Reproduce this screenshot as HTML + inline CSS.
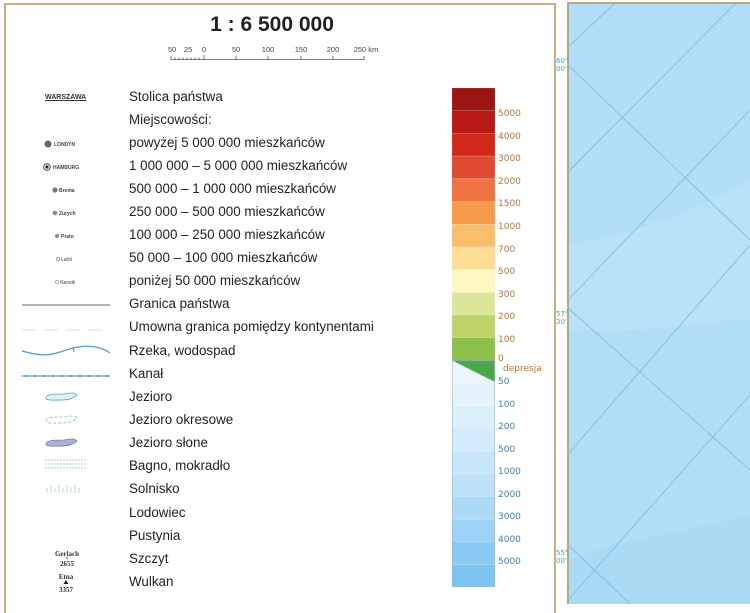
<!DOCTYPE html>
<html><head><meta charset="utf-8"><style>
html,body{margin:0;padding:0;background:#fff;}
body{width:750px;height:604px;position:relative;overflow:hidden;font-family:"Liberation Sans",sans-serif;}
.panel{position:absolute;left:4px;top:3px;width:552px;height:610px;border:2px solid #c9ad86;border-bottom:none;box-sizing:border-box;}
.t{position:absolute;left:129px;font-size:13.4px;line-height:18px;color:#222;white-space:nowrap;}
.s{position:absolute;font-size:7px;color:#333;white-space:nowrap;font-weight:bold;}
.lab{position:absolute;left:498px;font-size:9px;line-height:10px;font-family:"DejaVu Sans",sans-serif;}
.o{color:#b8733a;} .b{color:#3a80b5;}
</style></head><body>
<div class="panel"></div>
<div style="position:absolute;left:172px;top:13px;width:200px;text-align:center;font-size:21px;font-weight:bold;color:#222;">1 : 6 500 000</div>
<svg style="position:absolute;left:0;top:0" width="400" height="70">
<g font-size="7.5" fill="#444" font-family="Liberation Sans" text-anchor="middle">
<text x="172" y="52">50</text><text x="188" y="52">25</text><text x="204" y="52">0</text><text x="236" y="52">50</text><text x="268" y="52">100</text><text x="301" y="52">150</text><text x="333" y="52">200</text><text x="366" y="52">250 km</text></g>
<g stroke="#555" stroke-width="0.8"><line x1="171" y1="59.5" x2="364" y2="59.5"/>
<line x1="171" y1="56" x2="171" y2="60"/><line x1="204" y1="55" x2="204" y2="60"/><line x1="236" y1="56" x2="236" y2="60"/><line x1="268" y1="56" x2="268" y2="60"/><line x1="301" y1="56" x2="301" y2="60"/><line x1="333" y1="56" x2="333" y2="60"/><line x1="364" y1="56" x2="364" y2="60"/>
<line x1="175" y1="57.5" x2="175" y2="60"/><line x1="179" y1="57.5" x2="179" y2="60"/><line x1="183" y1="57.5" x2="183" y2="60"/><line x1="187" y1="57.5" x2="187" y2="60"/><line x1="191" y1="57.5" x2="191" y2="60"/><line x1="195" y1="57.5" x2="195" y2="60"/><line x1="199" y1="57.5" x2="199" y2="60"/></g>
</svg>
<div class="t" style="top:88px">Stolica państwa</div>
<div class="t" style="top:111px">Miejscowości:</div>
<div class="t" style="top:134px">powyżej 5 000 000 mieszkańców</div>
<div class="t" style="top:157px">1 000 000 – 5 000 000 mieszkańców</div>
<div class="t" style="top:180px">500 000 – 1 000 000 mieszkańców</div>
<div class="t" style="top:203px">250 000 – 500 000 mieszkańców</div>
<div class="t" style="top:226px">100 000 – 250 000 mieszkańców</div>
<div class="t" style="top:249px">50 000 – 100 000 mieszkańców</div>
<div class="t" style="top:272px">poniżej 50 000 mieszkańców</div>
<div class="t" style="top:295px">Granica państwa</div>
<div class="t" style="top:318px">Umowna granica pomiędzy kontynentami</div>
<div class="t" style="top:342px">Rzeka, wodospad</div>
<div class="t" style="top:365px">Kanał</div>
<div class="t" style="top:388px">Jezioro</div>
<div class="t" style="top:411px">Jezioro okresowe</div>
<div class="t" style="top:434px">Jezioro słone</div>
<div class="t" style="top:457px">Bagno, mokradło</div>
<div class="t" style="top:480px">Solnisko</div>
<div class="t" style="top:504px">Lodowiec</div>
<div class="t" style="top:527px">Pustynia</div>
<div class="t" style="top:550px">Szczyt</div>
<div class="t" style="top:573px">Wulkan</div>

<div class="s" style="left:45px;top:94px;text-decoration:underline;">WARSZAWA</div>
<svg style="position:absolute;left:0;top:0" width="130" height="604">
<circle cx="48" cy="144" r="3.5" fill="#666"/>
<circle cx="47" cy="167" r="3.3" fill="#fff" stroke="#333" stroke-width="0.9"/><circle cx="47" cy="167" r="1.6" fill="#222"/>
<circle cx="55" cy="190" r="2.6" fill="#777"/>
<circle cx="55" cy="213" r="2.3" fill="#888"/>
<circle cx="57" cy="236" r="2" fill="#888"/>
<circle cx="58" cy="259" r="1.7" fill="none" stroke="#888" stroke-width="0.8"/>
<circle cx="57" cy="282" r="1.5" fill="none" stroke="#999" stroke-width="0.8"/>
<line x1="22" y1="305" x2="110" y2="305" stroke="#999" stroke-width="1.5"/>
<line x1="22" y1="330" x2="110" y2="330" stroke="#ddd" stroke-width="1" stroke-dasharray="14,8"/>
<path d="M22 351 C40 356 48 356 60 352 C75 347 85 345 95 347 C102 348 106 350 110 353" fill="none" stroke="#5a9ab8" stroke-width="1.2"/>
<line x1="73" y1="347" x2="74" y2="352" stroke="#5a9ab8"/>
<line x1="22" y1="376" x2="110" y2="376" stroke="#6aaed0" stroke-width="1.4"/>
<g fill="#4a86a8"><circle cx="26" cy="376" r="1"/><circle cx="35" cy="376" r="1"/><circle cx="44" cy="376" r="1"/><circle cx="53" cy="376" r="1"/><circle cx="62" cy="376" r="1"/><circle cx="71" cy="376" r="1"/><circle cx="80" cy="376" r="1"/><circle cx="89" cy="376" r="1"/><circle cx="98" cy="376" r="1"/><circle cx="107" cy="376" r="1"/></g>
<path d="M46 398 C46 394 56 394 64 394 C70 393 74 392 77 395 C75 397 70 400 62 400 C56 400 46 401 46 398Z" fill="#dff2f8" stroke="#5a9ab8" stroke-width="0.8"/>
<path d="M46 421 C46 417 56 417 64 417 C70 416 74 415 77 418 C75 420 70 423 62 423 C56 423 46 424 46 421Z" fill="none" stroke="#8bb8cc" stroke-width="0.8" stroke-dasharray="3,2"/>
<path d="M46 444 C46 440 56 440 64 440 C70 439 74 438 77 441 C75 443 70 446 62 446 C56 446 46 447 46 444Z" fill="#aab2d6" stroke="#6a7ab0" stroke-width="0.8"/>
<g stroke="#8fc2d8" stroke-width="0.7" stroke-dasharray="2,1"><line x1="45" y1="460" x2="86" y2="460"/><line x1="45" y1="464" x2="86" y2="464"/><line x1="45" y1="468" x2="86" y2="468"/></g>
<g stroke="#9fc8d8" stroke-width="0.8"><line x1="47" y1="488" x2="47" y2="492"/><line x1="51" y1="486" x2="51" y2="493"/><line x1="55" y1="489" x2="55" y2="492"/><line x1="59" y1="485" x2="59" y2="493"/><line x1="63" y1="488" x2="63" y2="492"/><line x1="67" y1="485" x2="67" y2="493"/><line x1="71" y1="487" x2="71" y2="492"/><line x1="75" y1="485" x2="75" y2="493"/><line x1="79" y1="488" x2="79" y2="493"/></g>
<g font-family="Liberation Serif" font-size="7" fill="#333" text-anchor="middle" font-weight="bold">
<text x="67" y="556">Gerlach</text><circle cx="67" cy="558" r="0.8" fill="#333"/><text x="67" y="566">2655</text>
<text x="66" y="579">Etna</text><path d="M63.5 584 L66 580 L68.5 584Z" fill="#222"/><text x="66" y="592">3357</text></g>
<g font-size="5" fill="#444" font-family="Liberation Sans" font-weight="bold"><text x="54" y="146">LONDYN</text><text x="53" y="169">HAMBURG</text><text x="59" y="192">Brema</text><text x="59" y="215">Zurych</text><text x="61" y="238">Prato</text><text x="61" y="261" font-weight="normal">Lahti</text><text x="60" y="284" font-weight="normal">Narwik</text></g>
</svg>

<svg style="position:absolute;left:452px;top:88px" width="43" height="500">
<g stroke="#fff" stroke-opacity="0.25" stroke-width="0.5">
<rect y="0" width="43" height="22.7" fill="#9b1612"/>
<rect y="22.7" width="43" height="22.7" fill="#b71a17"/>
<rect y="45.4" width="43" height="22.7" fill="#d3291a"/>
<rect y="68.1" width="43" height="22.7" fill="#e14a31"/>
<rect y="90.8" width="43" height="22.7" fill="#ef7241"/>
<rect y="113.5" width="43" height="22.7" fill="#f69b4d"/>
<rect y="136.2" width="43" height="22.7" fill="#f9bd6b"/>
<rect y="158.9" width="43" height="22.7" fill="#fddc96"/>
<rect y="181.6" width="43" height="22.7" fill="#fef7c2"/>
<rect y="204.3" width="43" height="22.7" fill="#dee69b"/>
<rect y="227" width="43" height="22.7" fill="#bdd46b"/>
<rect y="249.7" width="43" height="22.7" fill="#8cc04b"/>
<rect y="272.4" width="43" height="22.7" fill="#edf6fd"/>
<rect y="295.1" width="43" height="22.7" fill="#e5f3fc"/>
<rect y="317.8" width="43" height="22.7" fill="#dcf0fc"/>
<rect y="340.5" width="43" height="22.7" fill="#d3ebfb"/>
<rect y="363.2" width="43" height="22.7" fill="#c8e6fa"/>
<rect y="385.9" width="43" height="22.7" fill="#bde1f9"/>
<rect y="408.6" width="43" height="22.7" fill="#acd9f7"/>
<rect y="431.3" width="43" height="22.7" fill="#9bd2f5"/>
<rect y="454" width="43" height="22.7" fill="#88caf3"/>
<rect y="476.7" width="43" height="22.3" fill="#7cc5f2"/>
</g>
<path d="M0 272.4 L43 272.4 L43 294 Z" fill="#4aa84a"/>
<rect x="0.3" y="272.4" width="42.4" height="226.3" fill="none" stroke="#9fb8c8" stroke-width="0.6"/>
</svg>
<div class="lab o" style="top:109px">5000</div>
<div class="lab o" style="top:132px">4000</div>
<div class="lab o" style="top:154px">3000</div>
<div class="lab o" style="top:177px">2000</div>
<div class="lab o" style="top:199px">1500</div>
<div class="lab o" style="top:222px">1000</div>
<div class="lab o" style="top:245px">700</div>
<div class="lab o" style="top:267px">500</div>
<div class="lab o" style="top:290px">300</div>
<div class="lab o" style="top:312px">200</div>
<div class="lab o" style="top:335px">100</div>
<div class="lab o" style="top:354px">0</div>
<div class="lab o" style="top:364px;left:503px">depresja</div>
<div class="lab b" style="top:377px">50</div>
<div class="lab b" style="top:400px">100</div>
<div class="lab b" style="top:422px">200</div>
<div class="lab b" style="top:445px">500</div>
<div class="lab b" style="top:467px">1000</div>
<div class="lab b" style="top:490px">2000</div>
<div class="lab b" style="top:512px">3000</div>
<div class="lab b" style="top:535px">4000</div>
<div class="lab b" style="top:557px">5000</div>

<svg style="position:absolute;left:0;top:0" width="750" height="604">
<rect x="568" y="3" width="182" height="601" fill="#b1ddf6"/>
<path d="M568 245 C620 235 680 220 750 180 L750 320 C700 320 650 335 568 330 Z" fill="#b9e1f7"/>
<path d="M568 560 C620 540 690 530 750 515 L750 604 L568 604 Z" fill="#abdaf5"/>
<g stroke="#7cc2df" stroke-width="0.9" fill="none">
<line x1="568" y1="47" x2="615" y2="3"/>
<line x1="568" y1="172" x2="736" y2="3"/>
<line x1="568" y1="300" x2="750" y2="110"/>
<line x1="568" y1="454" x2="750" y2="245"/>
<line x1="568" y1="600" x2="750" y2="395"/>
<line x1="568" y1="65" x2="750" y2="240"/>
<line x1="568" y1="308" x2="750" y2="470"/>
<line x1="568" y1="545" x2="630" y2="604"/>
</g>
<line x1="568" y1="3" x2="568" y2="604" stroke="#c2a37a" stroke-width="2"/>
<line x1="567" y1="3" x2="750" y2="3" stroke="#c2a37a" stroke-width="2"/>
<g font-size="7" fill="#4aa5c8" font-family="DejaVu Sans"><text x="556" y="63">60°</text><text x="556" y="71">00'</text><text x="556" y="316">57°</text><text x="556" y="324">30'</text><text x="556" y="555">55°</text><text x="556" y="563">00'</text></g>
</svg>
</body></html>
